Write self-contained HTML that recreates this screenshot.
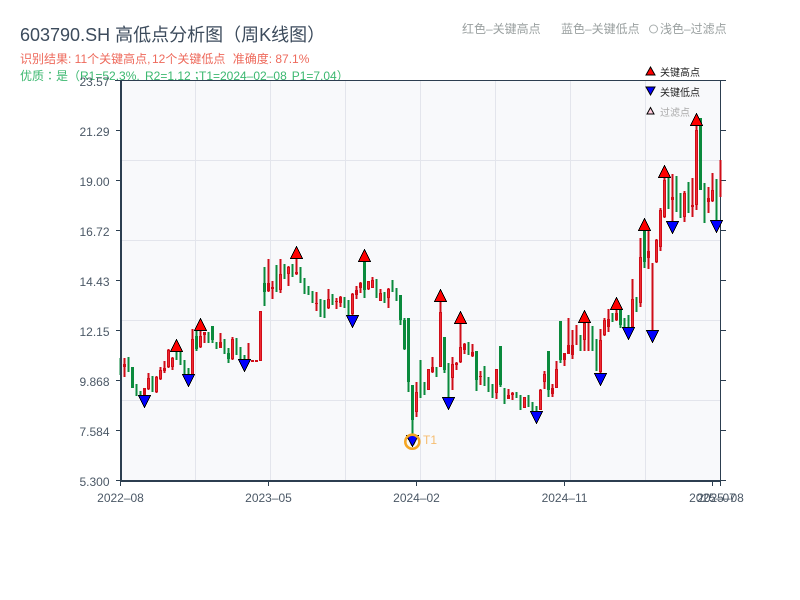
<!DOCTYPE html>
<html><head><meta charset="utf-8"><style>
html,body{margin:0;padding:0;background:#fff}
body{width:800px;height:600px;overflow:hidden}
svg{display:block}
text{font-family:"Liberation Sans","Noto Sans CJK SC",sans-serif}
</style></head><body>
<svg width="800" height="600" viewBox="0 0 800 600" xmlns="http://www.w3.org/2000/svg">
<rect width="800" height="600" fill="#fff"/>
<text x="20" y="41" font-size="18" fill="#3c4b5c">603790.SH 高低点分析图（周K线图）</text>
<text y="63" font-size="12" fill="#ee6a5c"><tspan x="20">识别结果: 11个关键高点,</tspan><tspan x="152">12个关键低点</tspan><tspan x="232.700">准确度: 87.1%</tspan></text>
<text y="80" font-size="12" fill="#3cb870" style="font-family:'Liberation Sans','Noto Sans CJK TC',sans-serif"><tspan x="20">优质：是（R1=52.3%,</tspan><tspan x="145">R2=1.12；</tspan><tspan x="199">T1=2024–02–08</tspan><tspan x="291.700">P1=7.04）</tspan></text>
<g font-size="12" fill="#9aa0a0">
<text x="462" y="33">红色–关键高点</text>
<text x="561" y="33">蓝色–关键低点</text>
<circle cx="653.500" cy="29" r="4" fill="none" stroke="#a8aeae"/>
<text x="660" y="33">浅色–过滤点</text>
</g>
<rect x="121" y="81" width="600" height="400" fill="#f8f9fb"/>
<path d="M195.5 81V481M270.5 81V481M345.5 81V481M420.5 81V481M495.5 81V481M570.5 81V481M645.5 81V481M121 160.5H721M121 240.5H721M121 320.5H721M121 400.5H721" stroke="#e3e5ec" stroke-width="1" fill="none"/>
<path d="M115 80.5H726M720.5 81V481M721 130.5H726M721 180.5H726M721 230.5H726M721 280.5H726M721 330.5H726M721 380.5H726M721 430.5H726M721 480.5H726" stroke="#2c3e50" stroke-width="1" fill="none"/>
<g shape-rendering="crispEdges" fill="none">
<path stroke="#0a8a3c" stroke-width="2" d="M120.500 358V375M128.500 357V372M132.500 367V388M136.500 384V396M140.500 391V396M152.500 376V392M176.500 350V360M180.500 352V365M184.500 360V374M188.500 368V375M196.500 331V351M208.500 332V343M212.500 326V343M216.500 342V349M224.500 339V354M228.500 348V363M236.500 338V355M240.500 347V360M244.500 355V365M264.500 267V306M276.500 265V292M284.500 264V279M292.500 264V277M300.500 267V283M304.500 278V294M308.500 286V295M312.500 291V303M320.500 299V317M324.500 300V318M332.500 294V305M344.500 297V308M348.500 300V315M364.500 262V298M376.500 279V298M384.500 292V303M392.500 280V292M396.500 288V301M400.500 295V325M404.500 318V350M408.500 318V392M412.500 385V436M420.500 360V398M424.500 382V395M436.500 367V377M444.500 337V373M448.500 363V397M468.500 342V355M476.500 351V391M484.500 366V386M488.500 377V392M492.500 384V398M500.500 346V387M504.500 388V404M516.500 392V398M520.500 395V410M528.500 395V407M532.500 402V412M536.500 406V412M548.500 351V397M560.500 321V363M580.500 335V351M592.500 326V351M596.500 339V371M612.500 313V322M620.500 310V328M624.500 318V328M628.500 315V328M636.500 297V312M644.500 231V268M668.500 177V209M676.500 176V212M680.500 193V218M688.500 182V213M700.500 118V190M704.500 183V223M716.500 179V220"/>
<path stroke="#0a8a3c" stroke-width="3" d="M132.500 367V388M196.500 336V349M212.500 326V340M228.500 353V359M264.500 283V292M364.500 262V290M400.500 295V320M404.500 320V349M408.500 318V382M412.500 385V420M444.500 337V370M476.500 351V380M500.500 346V385M548.500 351V390M560.500 321V360M620.500 310V325M644.500 231V262M700.500 118V190"/>
<path stroke="#cf0d18" stroke-width="2" d="M124.500 358V377M144.500 388V397M148.500 373V390M156.500 376V393M160.500 367V380M164.500 361V373M168.500 349V368M172.500 357V370M192.500 329V375M200.500 330V348M204.500 332V343M220.500 333V348M232.500 337V360M248.500 343V362M260.500 311V361M268.500 259V292M272.500 281V299M280.500 259V293M288.500 266V286M296.500 258V275M316.500 292V311M328.500 289V309M336.500 298V309M340.500 296V307M352.500 293V315M356.500 286V299M360.500 282V293M368.500 281V290M372.500 277V288M380.500 289V301M388.500 288V308M416.500 382V417M428.500 369V390M432.500 357V373M440.500 302V367M452.500 357V390M456.500 362V370M460.500 323V363M464.500 343V354M472.500 344V357M480.500 371V385M496.500 369V399M508.500 389V399M512.500 392V400M524.500 397V408M540.500 389V410M544.500 371V389M552.500 384V397M556.500 361V388M564.500 353V366M568.500 318V354M572.500 330V359M576.500 325V345M584.500 323V351M588.500 322V351M600.500 329V373M604.500 318V336M608.500 309V332M616.500 310V321M632.500 279V328M640.500 238V307M648.500 231V269M652.500 263V330M656.500 239V263M660.500 208V251M664.500 178V218M672.500 174V222M684.500 191V222M692.500 178V217M696.500 125V210M708.500 187V213M712.500 173V202M720.500 160V197"/>
<path stroke="#cf0d18" stroke-width="3" d="M124.500 364V367M144.500 388V397M148.500 378V389M156.500 377V392M160.500 370V379M164.500 368V371M168.500 350V367M172.500 358V367M192.500 339V375M200.500 336V347M204.500 332V335M220.500 342V348M232.500 339V359M248.500 360V362M252.500 360V362M256.500 360V362M260.500 311V361M268.500 283V291M272.500 287V289M280.500 274V290M288.500 267V274M296.500 272V274M316.500 303V304M328.500 299V308M336.500 301V302M340.500 297V303M352.500 294V314M356.500 290V295M360.500 283V288M368.500 281V289M372.500 280V288M380.500 293V301M388.500 289V298M416.500 392V412M428.500 369V390M432.500 367V372M440.500 312V367M452.500 364V378M456.500 363V365M460.500 347V362M464.500 344V350M472.500 352V356M480.500 376V377M496.500 369V393M508.500 395V399M512.500 393V395M524.500 397V408M540.500 390V410M544.500 374V382M552.500 388V394M556.500 369V388M564.500 353V360M568.500 345V354M572.500 345V355M584.500 323V340M600.500 340V372M604.500 320V335M608.500 319V327M616.500 313V320M632.500 299V327M640.500 257V303M648.500 251V258M656.500 240V262M660.500 210V247M664.500 180V217M672.500 197V200M684.500 193V217M692.500 205V207M696.500 130V205M708.500 198V202M712.500 190V201"/>
<path stroke="#ee2a32" stroke-width="1" d="M148.500 379V388M156.500 378V391M160.500 371V378M168.500 351V366M172.500 359V366M192.500 340V374M200.500 337V346M232.500 340V358M260.500 312V360M280.500 275V289M288.500 268V273M328.500 300V307M352.500 295V313M368.500 282V288M372.500 281V287M380.500 294V300M388.500 290V297M416.500 393V411M428.500 370V389M440.500 313V366M452.500 365V377M460.500 348V361M496.500 370V392M524.500 398V407M540.500 391V409M544.500 375V381M556.500 370V387M584.500 324V339M600.500 341V371M604.500 321V334M632.500 300V326M640.500 258V302M656.500 241V261M660.500 211V246M664.500 181V216M684.500 194V216M696.500 131V204M712.500 191V200"/>
</g>
<g stroke="#000" stroke-width="1" fill="#f00" shape-rendering="crispEdges">
<path d="M176.5 339.5L182.5 351.5H170.5Z"/>
<path d="M200.5 318.5L206.5 330.5H194.5Z"/>
<path d="M296.5 246.5L302.5 258.5H290.5Z"/>
<path d="M364.5 249.5L370.5 261.5H358.5Z"/>
<path d="M440.5 289.5L446.5 301.5H434.5Z"/>
<path d="M460.5 311.5L466.5 323.5H454.5Z"/>
<path d="M584.5 310.5L590.5 322.5H578.5Z"/>
<path d="M616.5 297.5L622.5 309.5H610.5Z"/>
<path d="M644.5 218.5L650.5 230.5H638.5Z"/>
<path d="M664.5 165.5L670.5 177.5H658.5Z"/>
<path d="M696.5 113.5L702.5 125.5H690.5Z"/>
</g>
<g stroke="#000" stroke-width="1" fill="#00f" shape-rendering="crispEdges">
<path d="M144.5 407.5L150.5 395.5H138.5Z"/>
<path d="M188.5 386.5L194.5 374.5H182.5Z"/>
<path d="M244.5 371.5L250.5 359.5H238.5Z"/>
<path d="M352.5 327.5L358.5 315.5H346.5Z"/>
<path d="M412.5 446.5L418.5 435.5H406.5Z"/>
<path d="M448.5 409.5L454.5 397.5H442.5Z"/>
<path d="M536.5 423.5L542.5 411.5H530.5Z"/>
<path d="M600.5 385.5L606.5 373.5H594.5Z"/>
<path d="M628.5 339.5L634.5 327.5H622.5Z"/>
<path d="M652.5 342.5L658.5 330.5H646.5Z"/>
<path d="M672.5 233.5L678.5 221.5H666.5Z"/>
<path d="M716.5 232.5L722.5 220.5H710.5Z"/>
</g>
<circle cx="412.3" cy="441.7" r="7" fill="none" stroke="#f5a623" stroke-width="2.6"/>
<text x="423" y="444" font-size="12" fill="#f6bd70">T1</text>
<path d="M121 80V482M120 481H721" stroke="#2c3e50" stroke-width="2" fill="none"/>
<path d="M116 130.5H121M116 180.5H121M116 230.5H121M116 280.5H121M116 330.5H121M116 380.5H121M116 430.5H121M116 480.5H121M120.5 481V486M268.5 481V486M416.5 481V486M564.5 481V486M712.5 481V486M720.5 481V486" stroke="#2c3e50" stroke-width="1" fill="none"/>
<g font-size="12" fill="#4b5866" text-anchor="end">
<text x="109.500" y="86">23.57</text>
<text x="109.500" y="136">21.29</text>
<text x="109.500" y="186">19.00</text>
<text x="109.500" y="236">16.72</text>
<text x="109.500" y="286">14.43</text>
<text x="109.500" y="336">12.15</text>
<text x="109.500" y="386">9.868</text>
<text x="109.500" y="436">7.584</text>
<text x="109.500" y="486">5.300</text>
</g>
<g font-size="12" fill="#4b5866" text-anchor="middle">
<text x="120.5" y="502">2022–08</text>
<text x="268.5" y="502">2023–05</text>
<text x="416.5" y="502">2024–02</text>
<text x="564.5" y="502">2024–11</text>
<text x="712.5" y="502">2025–07</text>
<text x="720.5" y="502">2025–08</text>
</g>
<path d="M650.5 67L655 75H646Z" fill="#f00" stroke="#000" stroke-width="1"/>
<path d="M650.5 95L655 87H646Z" fill="#00f" stroke="#000" stroke-width="1"/>
<path d="M650.5 107.500L654 114H647Z" fill="#fcd" stroke="#000" stroke-width="1"/>
<text x="660" y="76" font-size="10" fill="#222">关键高点</text>
<text x="660" y="96" font-size="10" fill="#222">关键低点</text>
<text x="660" y="116" font-size="10" fill="#aaa">过滤点</text>
</svg>
</body></html>
